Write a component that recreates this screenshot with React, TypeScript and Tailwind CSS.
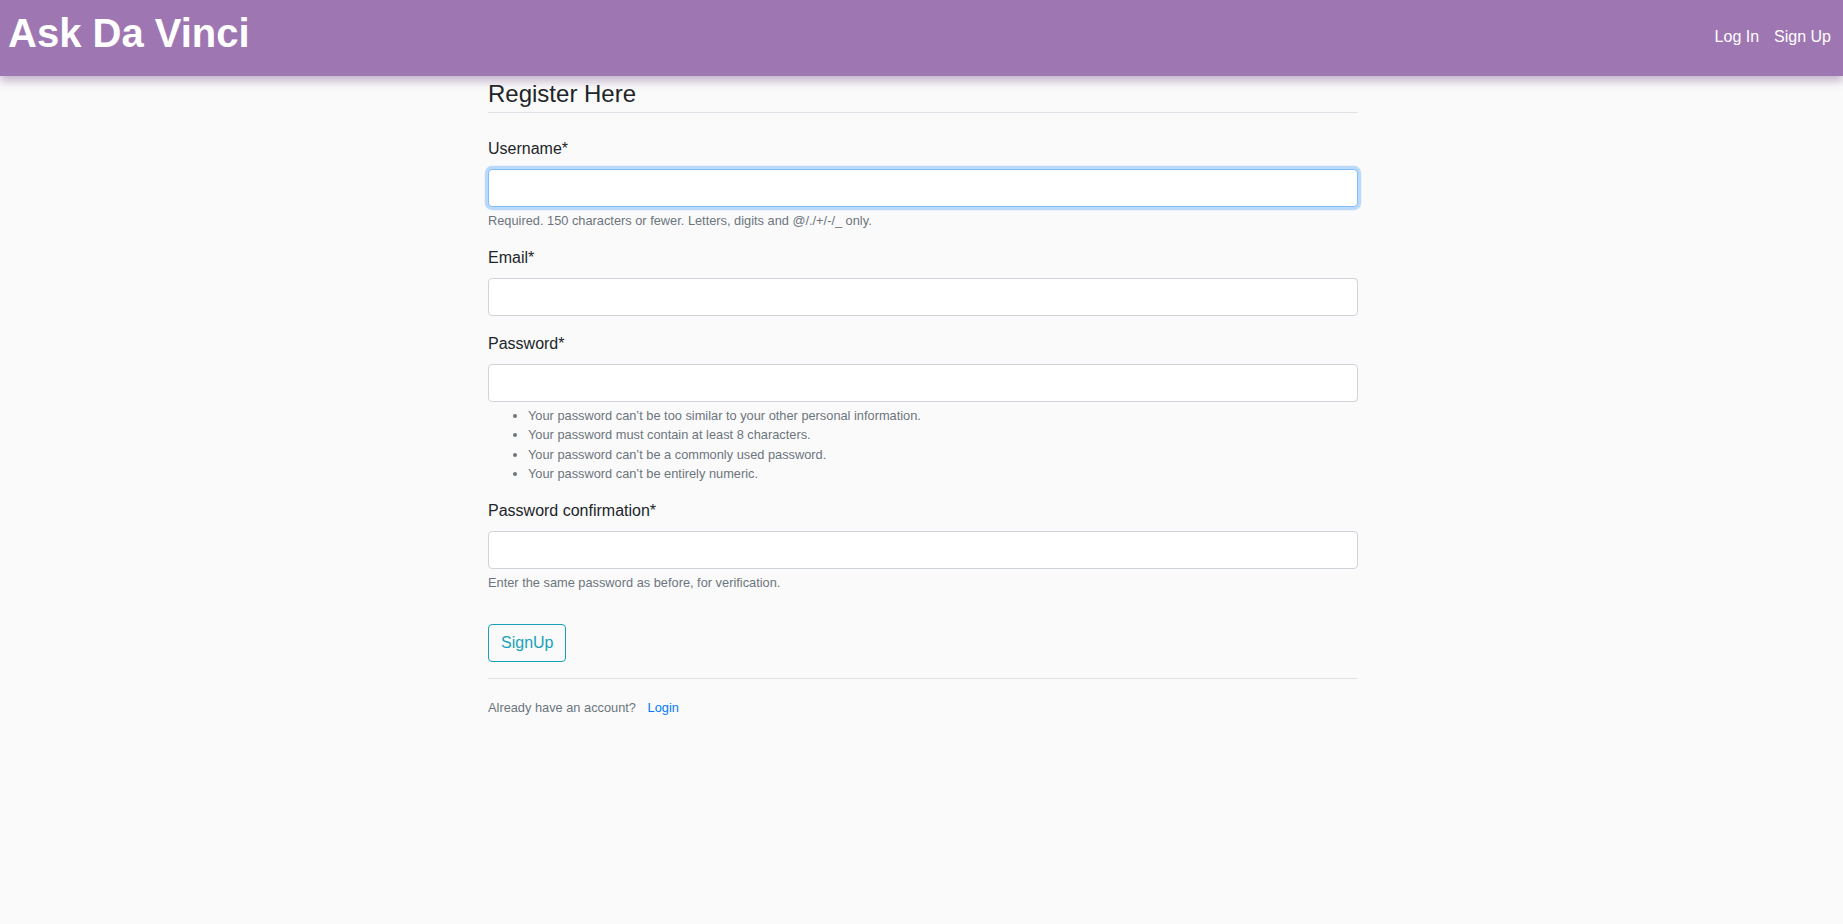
import React from "react";

const font = { fontFamily: '"Liberation Sans", Arial, sans-serif' };

function Field({
  label,
  focused,
  type = "text",
  children,
}: {
  label: string;
  focused?: boolean;
  type?: string;
  children?: React.ReactNode;
}) {
  return (
    <div className="mb-4">
      <label className="block mb-2 text-base leading-6 text-[#212529]">{label}</label>
      <input
        type={type}
        className={
          "block w-full h-[38px] px-3 rounded-[4px] bg-white border text-base outline-none " +
          (focused
            ? "border-[#80bdff] shadow-[0_0_0_3.2px_rgba(0,123,255,0.25)]"
            : "border-[#ced4da]")
        }
      />
      {children}
    </div>
  );
}

export default function App() {
  return (
    <div className="min-h-screen bg-[#fafafa] text-[#212529]" style={font}>
      {/* Top bar */}
      <header className="h-[76px] bg-[#9e76b2] flex justify-between shadow-[0_5px_9px_rgba(110,70,130,0.4)] relative z-10">
        <h1 className="pl-[8px] pt-[9px] text-[40px] leading-[48px] font-bold text-white">Ask Da Vinci</h1>
        <nav className="flex gap-[15px] pr-[12px] pt-[25px] text-base leading-6 text-white">
          <a href="#">Log In</a>
          <a href="#">Sign Up</a>
        </nav>
      </header>

      <main className="w-[873px] mx-auto pl-[3px] pt-[3px]">
        <form>
          <fieldset>
            <legend className="w-full text-[24px] leading-[29px] pb-[4px] border-b border-[#dee2e6] mb-6">
              Register Here
            </legend>

            <Field label="Username*" focused>
              <small className="block mt-1 text-[12.8px] leading-[19.2px] text-[#6c757d]">
                Required. 150 characters or fewer. Letters, digits and @/./+/-/_ only.
              </small>
            </Field>

            <Field label="Email*" type="email" />

            <Field label="Password*" type="password">
              <ul className="mt-1 pl-10 list-disc text-[12.8px] leading-[19.2px] text-[#6c757d]">
                <li>Your password can’t be too similar to your other personal information.</li>
                <li>Your password must contain at least 8 characters.</li>
                <li>Your password can’t be a commonly used password.</li>
                <li>Your password can’t be entirely numeric.</li>
              </ul>
            </Field>

            <Field label="Password confirmation*" type="password">
              <small className="block mt-1 text-[12.8px] leading-[19.2px] text-[#6c757d]">
                Enter the same password as before, for verification.
              </small>
            </Field>
          </fieldset>

          <div className="pt-4">
            <button
              type="button"
              className="h-[38px] px-3 rounded-[4px] border border-[#17a2b8] text-[#17a2b8] text-base leading-6"
            >
              SignUp
            </button>
          </div>
        </form>

        <div className="mt-4 pt-4 border-t border-[#dee2e6]">
          <small className="text-[12.8px] leading-[19.2px] text-[#6c757d]">
            Already have an account?{" "}
            <a href="#" className="ml-2 text-[#007bff]">
              Login
            </a>
          </small>
        </div>
      </main>
    </div>
  );
}
